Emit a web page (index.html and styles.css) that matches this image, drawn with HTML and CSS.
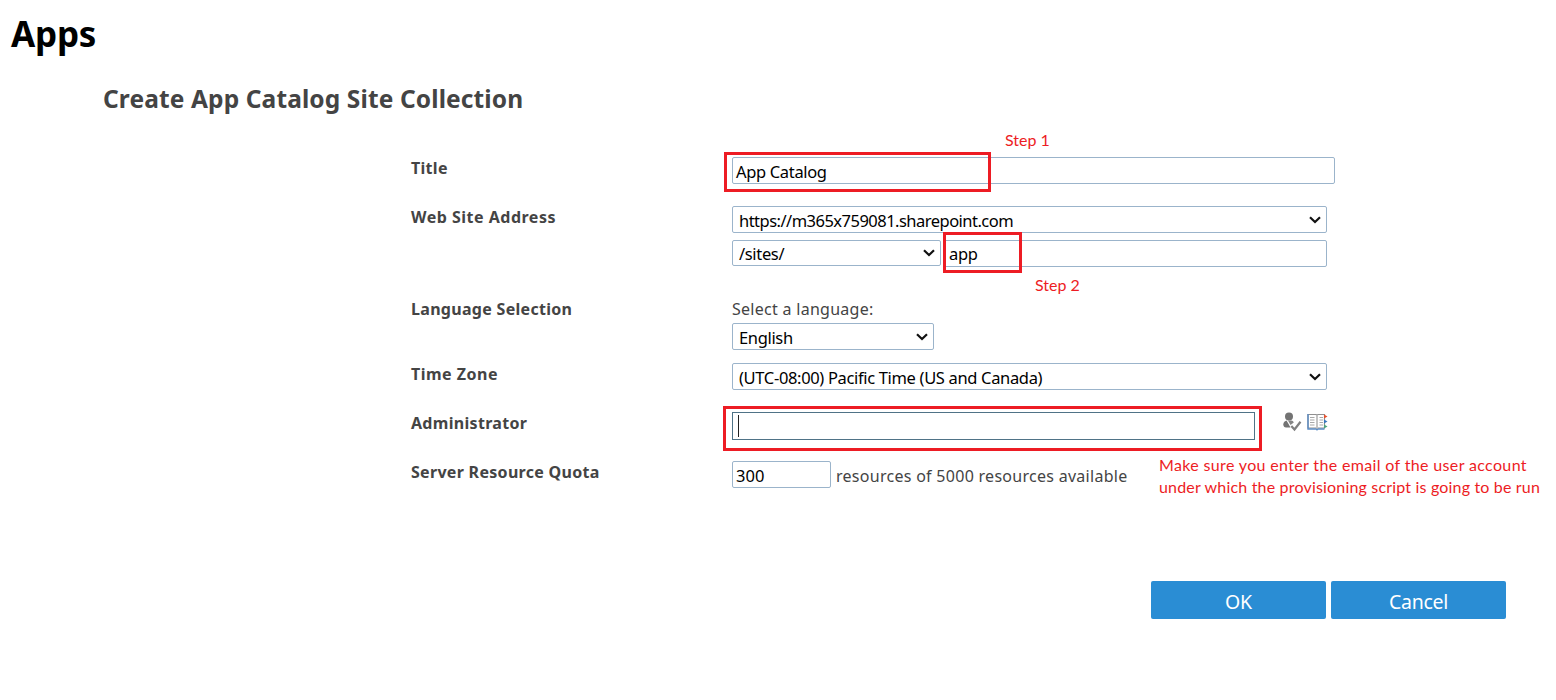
FILE: index.html
```
<!DOCTYPE html>
<html lang="en">
<head>
<meta charset="utf-8">
<title>Apps</title>
<link rel="stylesheet" href="styles.css">
</head>
<body>
<main class="page">
  <h1 class="page-title">Apps</h1>
  <h2 class="form-title">Create App Catalog Site Collection</h2>
  <form class="form">
    <div class="row row-title">
      <div class="label">Title</div>
      <div class="fields">
        <div class="box box-title"><span>App Catalog</span></div>
      </div>
    </div>
    <div class="row row-address">
      <div class="label label-address">Web Site Address</div>
      <div class="fields">
        <div class="box select box-wide"><span class="url">https://m365x759081.sharepoint.com</span><svg class="chevron" viewBox="0 0 12 8"><path d="M1 1.2 6 6 11 1.2"/></svg></div>
        <div class="line">
          <div class="box select box-path"><span>/sites/</span><svg class="chevron" viewBox="0 0 12 8"><path d="M1 1.2 6 6 11 1.2"/></svg></div>
          <div class="box box-name"><span>app</span></div>
        </div>
      </div>
    </div>
    <div class="row row-language">
      <div class="label">Language Selection</div>
      <div class="fields">
        <div class="hint hint-language">Select a language:</div>
        <div class="box select box-language"><span>English</span><svg class="chevron" viewBox="0 0 12 8"><path d="M1 1.2 6 6 11 1.2"/></svg></div>
      </div>
    </div>
    <div class="row row-zone">
      <div class="label label-zone">Time Zone</div>
      <div class="fields">
        <div class="box select box-wide"><span>(UTC-08:00) Pacific Time (US and Canada)</span><svg class="chevron" viewBox="0 0 12 8"><path d="M1 1.2 6 6 11 1.2"/></svg></div>
      </div>
    </div>
    <div class="row row-admin">
      <div class="label">Administrator</div>
      <div class="fields line">
        <div class="box box-admin"><i class="caret"></i></div>
        <svg class="icon-user" viewBox="0 0 20 20"><circle cx="7" cy="4.500" r="4" fill="#737373"/><path d="M4.500 8.500Q1.300 9.500 1.300 12.500 1.500 15.500 4 15.500H8.500L6 11Z" fill="#737373"/><path d="M6 8.500 8.500 13 11.800 10.500Q11 8.500 9.500 8.500Z" fill="#858585"/><path d="m9.300 14 3.200 3.500L18.500 9.800" fill="none" stroke="#808080" stroke-width="2.200"/></svg>
        <svg class="icon-book" viewBox="0 0 21 18"><path d="M1 1.500h8l1 .8 1-.8h6.500v13.500H11l-1 1-1-1H1Z" fill="#fff" stroke="#909090" stroke-width="1.200"/><path d="M1 1v15h8l1 .8 1-.8h6.500" fill="none" stroke="#5b8cc5" stroke-width="1.400"/><path d="M10 2.500v13" stroke="#c4c4c4" stroke-width="2"/><path d="M3 4.500h4.500M3 7h4.500M3 9.500h4.500M3 12h4.500M12.500 4.500h3.500M12.500 7h3.500M12.500 9.500h3.500M12.500 12h3.500" stroke="#a8a8a8"/><path d="m17 1.500 3.500 2-3.500 2Z" fill="#e8502c"/><path d="m17 6.500 3.500 2-3.500 2Z" fill="#3775bd"/><path d="m17 11.500 3.500 2-3.500 2Z" fill="#4ba37b"/></svg>
      </div>
    </div>
    <div class="row row-quota">
      <div class="label">Server Resource Quota</div>
      <div class="fields line">
        <div class="box box-quota"><span>300</span></div>
        <div class="hint quota-text">resources of 5000 resources available</div>
      </div>
    </div>
  </form>
  <div class="actions">
    <button class="button" type="button">OK</button>
    <button class="button" type="button">Cancel</button>
  </div>
  <div class="mark mark-title"></div>
  <div class="mark mark-name"></div>
  <div class="mark mark-admin"></div>
  <p class="note note-one">Step 1</p>
  <p class="note note-two">Step 2</p>
  <p class="note note-admin"><span class="note-first">Make sure you enter the email of the user account</span><br><span class="note-second">under which the provisioning script is going to be run</span></p>
</main>
</body>
</html>
```
FILE: styles.css
```
* { box-sizing: border-box; }
body {
  margin: 0;
  background: #fff;
  color: #444;
  font-family: "Noto Sans", "Open Sans", sans-serif;
  font-size: 16px;
}
.page { position: relative; width: 1556px; height: 700px; overflow: hidden; }
.page-title { margin: 0; padding: 10px 0 0 11px; font-size: 35px; line-height: 48px; font-weight: 700; letter-spacing: -0.2px; color: #000; }
.form-title { margin: 0; padding: 24px 0 0 103px; font-size: 24.5px; line-height: 34px; font-weight: 700; letter-spacing: 0.12px; }
.form { padding: 41px 0 0 411px; }
.row { display: grid; grid-template-columns: 321px 1fr; align-items: start; }
.row-title { height: 49px; }
.row-address { height: 92px; }
.row-language { height: 65px; }
.row-zone { height: 49px; }
.row-admin { height: 49px; }
.row-quota { height: 28px; }
.label { font-weight: 700; font-size: 16px; line-height: 22px; letter-spacing: 0.3px; white-space: nowrap; }
.label-address, .label-zone { letter-spacing: 0.5px; }
.line { display: flex; align-items: flex-start; }
.box {
  display: flex;
  align-items: center;
  height: 27px;
  padding: 3px 4px 0;
  border: 1px solid #9bb4cb;
  border-radius: 2px;
  background: #fff;
  color: #000;
  font-size: 16.5px;
  line-height: 22px;
  letter-spacing: -0.34px;
  white-space: nowrap;
}
.box-title, .box-quota { padding-left: 3px; }
.select { justify-content: space-between; padding: 3px 5px 0 6px; }
.url { letter-spacing: -0.52px; }
.box-title { width: 603px; }
.box-wide { width: 595px; margin-bottom: 7px; }
.box-path { width: 209px; height: 26px; margin-right: 3px; padding-top: 2px; }
.box-name { width: 383px; padding-top: 1px; }
.box-language { width: 202px; }
.box-admin { width: 523px; height: 28px; border-color: #4f7387; border-radius: 0; padding: 0 5px; }
.box-quota { width: 99px; letter-spacing: 0; }
.caret { width: 1px; height: 22px; background: #222; }
.chevron { width: 12px; height: 8px; margin-top: -3px; fill: none; stroke: #111; stroke-width: 2.2; }
.icon-user { width: 20px; height: 20px; margin: 0 0 0 27px; }
.icon-book { width: 21px; height: 18px; margin: 1px 0 0 5px; }
.hint { line-height: 22px; letter-spacing: 0.28px; white-space: nowrap; }
.hint-language { height: 25px; }
.quota-text { padding: 4px 0 0 5px; }
.actions { display: flex; gap: 5px; padding: 92px 0 0 1151px; }
.button {
  width: 175px;
  height: 38px;
  padding: 3px 0 0;
  border: 0;
  border-radius: 2px;
  background: #2a8dd4;
  color: #fff;
  font: 19.5px/28px "Noto Sans", "Open Sans", sans-serif;
  letter-spacing: -0.25px;
}
.mark { position: absolute; border: 3px solid #ed1c24; }
.mark-title { left: 724px; top: 152px; width: 267px; height: 40px; }
.mark-name { left: 943px; top: 232px; width: 79px; height: 41px; }
.mark-admin { left: 723px; top: 406px; width: 539px; height: 45px; }
.note { position: absolute; margin: 0; color: #ed1c24; font: 16px/22px Lato, sans-serif; white-space: nowrap; }
.note-one { left: 1005px; top: 129px; }
.note-two { left: 1035px; top: 274px; }
.note-admin { left: 1159px; top: 454px; }
.note-first { letter-spacing: 0.35px; }
.note-second { letter-spacing: 0.18px; }
```
